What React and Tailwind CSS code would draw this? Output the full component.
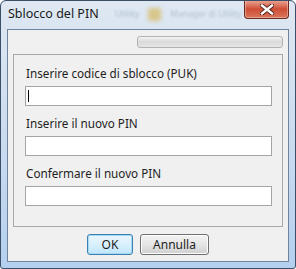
import React from "react";

export default function App() {
  const font = { fontFamily: '"Segoe UI", "Noto Sans", "Liberation Sans", sans-serif' };
  return (
    <div className="w-[296px] h-[269px] bg-white">
      <div
        className="w-[296px] h-[269px] flex flex-col border border-[#3b4f69] rounded-t-[6px] rounded-b-[3px] bg-gradient-to-b from-[#dfe8f2] via-[#cbdcef] to-[#b4d0ef] overflow-hidden"
        style={font}
      >
        {/* Title bar */}
        <div className="h-[28px] flex items-start shrink-0">
          <div className="pl-[7px] pt-[5px] text-[12.5px] leading-[16px] text-[#1a1a1a] whitespace-nowrap">
            Sblocco del PIN
          </div>
          <div className="flex-1 min-w-0 flex items-start gap-[9px] pt-[7px] pl-[16px]">
            <span className="text-[9px] leading-[12px] text-[#aebdcd] blur-[1.2px] whitespace-nowrap">Utility</span>
            <span className="w-[13px] h-[13px] rounded-[2px] bg-[#d8c68a] blur-[2px] shrink-0"></span>
            <span className="text-[8.5px] leading-[12px] text-[#b1bfce] blur-[1.2px] whitespace-nowrap">Manager di Utility</span>
          </div>
          <div className="w-[45px] h-[19px] -mt-px mr-[6px] shrink-0 rounded-b-[4px] border border-[#6b2a1f] border-t-0 bg-gradient-to-b from-[#e9a897] via-[#cf4d35] to-[#d9745a] flex items-center justify-center shadow-[inset_0_0_0_1px_rgba(255,255,255,0.35)]">
            <svg width="14" height="11" viewBox="0 0 14 11">
              <path
                d="M2 1.5 L12 9.5 M12 1.5 L2 9.5"
                stroke="#4a1e17"
                strokeWidth="4.2"
                strokeLinecap="square"
              />
              <path
                d="M2 1.5 L12 9.5 M12 1.5 L2 9.5"
                stroke="#ffffff"
                strokeWidth="2.4"
                strokeLinecap="square"
              />
            </svg>
          </div>
        </div>

        {/* Client area */}
        <div className="mx-[6px] mb-[6px] h-[233px] border border-[#6f849c] bg-[#f0f0f0] flex flex-col px-[5px]">
          <div className="flex justify-end pt-[6px]">
            <div className="w-[146px] h-[12px] rounded-[3px] border border-[#b2b2b2] bg-gradient-to-b from-[#f3f3f3] via-[#dadada] to-[#e6e6e6]"></div>
          </div>
          <div className="mt-[6px] h-[173px] border border-[#a8a8a8] pt-[10px] pl-[11px] pr-[10px] flex flex-col text-[11.7px] text-[#1e1e1e]">
            <div className="h-[16px] leading-[16px] pl-px whitespace-nowrap">Inserire codice di sblocco (PUK)</div>
            <div className="mt-[5px] h-[20px] border border-[#a5a5a5] bg-white flex items-center pl-[2px]">
              <div className="w-px h-[12px] bg-black"></div>
            </div>
            <div className="mt-[9px] h-[16px] leading-[16px] pl-px whitespace-nowrap">Inserire il nuovo PIN</div>
            <div className="mt-[5px] h-[20px] border border-[#a5a5a5] bg-white"></div>
            <div className="mt-[9px] h-[16px] leading-[16px] pl-px whitespace-nowrap">Confermare il nuovo PIN</div>
            <div className="mt-[5px] h-[20px] border border-[#a5a5a5] bg-white"></div>
          </div>
          <div className="mt-[7px] flex pl-[74px] gap-[7px] text-[12px] text-[#1e1e1e]">
            <div className="w-[46px] h-[21px] rounded-[3px] border border-[#3c7fb1] bg-gradient-to-b from-[#eaf6fd] via-[#d9f0fc] to-[#bee6fd] flex items-center justify-center shadow-[inset_0_0_0_1px_#a6d9f4]">
              OK
            </div>
            <div className="w-[69px] h-[21px] rounded-[3px] border border-[#707070] bg-gradient-to-b from-[#f2f2f2] via-[#e5e5e5] to-[#d0d0d0] flex items-center justify-center shadow-[inset_0_0_0_1px_#fcfcfc]">
              Annulla
            </div>
          </div>
        </div>
      </div>
    </div>
  );
}
